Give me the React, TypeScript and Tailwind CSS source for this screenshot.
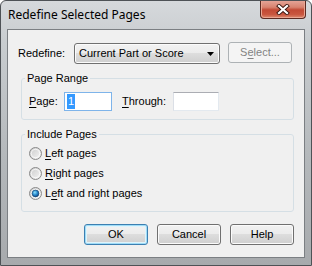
import React from "react";

function Radio({ checked }: { checked?: boolean }) {
  return (
    <svg width="13" height="13" viewBox="0 0 13 13" className="shrink-0">
      <defs>
        <linearGradient id="rb" x1="0" y1="0" x2="1" y2="1">
          <stop offset="0" stopColor="#c9c9c9" />
          <stop offset="1" stopColor="#f7f7f7" />
        </linearGradient>
        <radialGradient id="rdot" cx="0.4" cy="0.35" r="0.7">
          <stop offset="0" stopColor="#8fe0fa" />
          <stop offset="0.5" stopColor="#2a8ccf" />
          <stop offset="1" stopColor="#0b3f7a" />
        </radialGradient>
      </defs>
      <circle cx="6.5" cy="6.5" r="6" fill="url(#rb)" stroke="#8a8a8a" strokeWidth="1" />
      <circle cx="6.5" cy="6.5" r="4.2" fill="none" stroke="#ffffff" strokeOpacity="0.7" strokeWidth="1" />
      {checked && <circle cx="6.5" cy="6.5" r="3.4" fill="url(#rdot)" stroke="#14406e" strokeWidth="0.6" />}
    </svg>
  );
}

function Btn({ children, def }: { children: React.ReactNode; def?: boolean }) {
  return (
    <div
      className={`w-[64px] h-[21px] rounded-[3px] border flex items-center justify-center text-black bg-[linear-gradient(#f2f2f2_0%,#ebebeb_50%,#dddddd_50%,#cfcfcf_100%)] ${
        def
          ? "border-[#3c7fb1] shadow-[inset_0_0_0_1px_#9fdcf7,inset_0_0_0_2px_#dff3fb]"
          : "border-[#707070] shadow-[inset_0_0_0_1px_#fbfbfb]"
      }`}
    >
      {children}
    </div>
  );
}

export default function App() {
  return (
    <div
      className="w-[312px] h-[266px] flex flex-col border border-[#4e5256] rounded-t-[6px] bg-[linear-gradient(#d6d9dc_0%,#c9cdd0_15%,#b4b8bb_60%,#a7aaad_100%)] text-[11px] text-black overflow-hidden"
      style={{ fontFamily: '"Liberation Sans", Arial, sans-serif' }}
    >
      {/* title bar */}
      <div className="h-[28px] flex items-start justify-between shrink-0">
        <span
          className="pl-[7px] pt-[7px] text-[12px] leading-[14px] text-black"
          style={{ fontFamily: '"Noto Sans", sans-serif' }}
        >
          Redefine Selected Pages
        </span>
        <div className="mr-[5px] w-[46px] h-[19px] -mt-[1px] rounded-b-[4px] border border-[#5c2a22] border-t-0 bg-[linear-gradient(#e6a89c_0%,#d88370_40%,#c24a35_55%,#c9563f_80%,#dc8a6f_100%)] shadow-[inset_0_0_0_1px_#eaa693] flex items-center justify-center">
          <svg width="14" height="11" viewBox="0 0 14 11">
            <path d="M3 2 L11 9 M11 2 L3 9" stroke="#3a1610" strokeWidth="4" strokeLinecap="square" />
            <path d="M3 2 L11 9 M11 2 L3 9" stroke="#ffffff" strokeWidth="2.2" strokeLinecap="square" />
          </svg>
        </div>
      </div>

      {/* client area */}
      <div className="flex-1 mx-[6px] mb-[7px] border border-[#7b7f83] bg-[#f0f0f0] flex flex-col">
        <div className="mt-[13px] h-[21px] flex items-center">
          <span className="ml-[10px] w-[56px]">Redefine:</span>
          <div className="w-[146px] h-[21px] rounded-[3px] border border-[#707070] shadow-[inset_0_0_0_1px_#fbfbfb] bg-[linear-gradient(#f2f2f2_0%,#ebebeb_50%,#dddddd_50%,#cfcfcf_100%)] flex items-center justify-between pl-[4px] pr-[5px]">
            <span>Current Part or Score</span>
            <svg width="7" height="4" viewBox="0 0 7 4">
              <path d="M0 0 H7 L3.5 4 Z" fill="#000" />
            </svg>
          </div>
          <div className="ml-[8px] w-[64px] h-[21px] -mt-[2px] rounded-[3px] border border-[#adb2b5] bg-[#f4f4f4] flex items-center justify-center text-[#838383]">
            <span>
              S<span className="underline underline-offset-2">e</span>lect...
            </span>
          </div>
        </div>

        <fieldset className="mt-[8px] ml-[13px] mr-[10px] h-[48px] border border-[#d5dfe5] rounded-[3px]">
          <legend className="ml-[3px] px-[2px] leading-[13px]">Page Range</legend>
          <div className="mt-[7px] h-[19px] flex items-center">
            <span className="ml-[7px] w-[35px]">
              <span className="underline underline-offset-2">P</span>age:
            </span>
            <div className="w-[48px] h-[19px] border border-[#7eb4ea] bg-white flex items-center pl-[2px]">
              <span className="bg-[#3399ff] text-white px-[1px] leading-[15px]">1</span>
            </div>
            <span className="ml-[10px] w-[51px]">
              <span className="underline underline-offset-2">T</span>hrough:
            </span>
            <div className="w-[46px] h-[19px] border border-[#abadb3] border-l-[#dbdfe6] border-r-[#e3e9ef] border-b-[#e3e9ef] bg-white" />
          </div>
        </fieldset>

        <fieldset className="mt-[8px] ml-[13px] mr-[10px] h-[84px] border border-[#d5dfe5] rounded-[3px]">
          <legend className="ml-[3px] px-[2px] leading-[13px]">Include Pages</legend>
          <div className="pt-[2px] flex flex-col">
            <div className="h-[20px] flex items-center pl-[7px] gap-[3px]">
              <Radio />
              <span>
                <span className="underline underline-offset-2">L</span>eft pages
              </span>
            </div>
            <div className="h-[20px] flex items-center pl-[7px] gap-[3px]">
              <Radio />
              <span>
                <span className="underline underline-offset-2">R</span>ight pages
              </span>
            </div>
            <div className="h-[20px] flex items-center pl-[7px] gap-[3px]">
              <Radio checked />
              <span>
                L<span className="underline underline-offset-2">e</span>ft and right pages
              </span>
            </div>
          </div>
        </fieldset>

        <div className="mt-[12px] mr-[10px] flex justify-end gap-[9px]">
          <Btn def>OK</Btn>
          <Btn>Cancel</Btn>
          <Btn>Help</Btn>
        </div>
      </div>
    </div>
  );
}
